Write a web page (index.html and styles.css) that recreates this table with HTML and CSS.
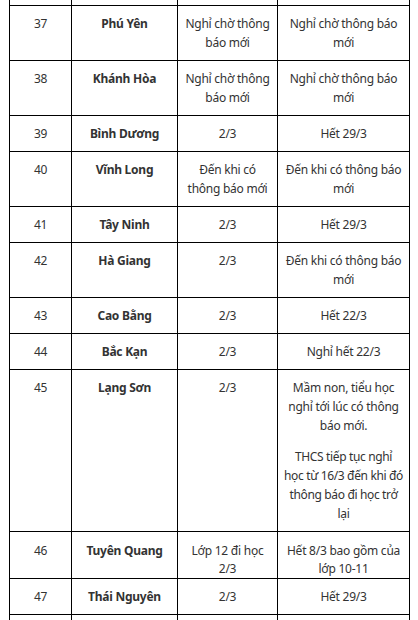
FILE: index.html
```html
<!DOCTYPE html>
<html lang="vi">
<head>
<meta charset="utf-8">
<link rel="stylesheet" href="styles.css">
</head>
<body>
<div class="wrap">
<table class="tbl">
<colgroup><col class="c1"><col class="c2"><col class="c3"><col class="c4"></colgroup>
<tbody>
<tr class="stub"><td></td><td></td><td></td><td></td></tr>
<tr><td>37</td><td class="b">Phú Yên</td><td>Nghỉ chờ thông báo mới</td><td>Nghỉ chờ thông báo mới</td></tr>
<tr><td>38</td><td class="b">Khánh Hòa</td><td>Nghỉ chờ thông báo mới</td><td>Nghỉ chờ thông báo mới</td></tr>
<tr><td>39</td><td class="b">Bình Dương</td><td>2/3</td><td>Hết 29/3</td></tr>
<tr><td>40</td><td class="b">Vĩnh Long</td><td>Đến khi có thông báo mới</td><td>Đến khi có thông báo mới</td></tr>
<tr><td>41</td><td class="b">Tây Ninh</td><td>2/3</td><td>Hết 29/3</td></tr>
<tr><td>42</td><td class="b">Hà Giang</td><td>2/3</td><td>Đến khi có thông báo mới</td></tr>
<tr><td>43</td><td class="b">Cao Bằng</td><td>2/3</td><td>Hết 22/3</td></tr>
<tr><td>44</td><td class="b">Bắc Kạn</td><td>2/3</td><td>Nghỉ hết 22/3</td></tr>
<tr><td>45</td><td class="b">Lạng Sơn</td><td>2/3</td><td><p class="para">Mầm non, tiểu học nghỉ tới lúc có thông báo mới.</p><p class="para last">THCS tiếp tục nghỉ<br>học từ 16/3 đến khi đó<br>thông báo đi học trở<br>lại</p></td></tr>
<tr class="tight"><td>46</td><td class="b">Tuyên Quang</td><td>Lớp 12 đi học 2/3</td><td>Hết 8/3 bao gồm của lớp 10-11</td></tr>
<tr><td>47</td><td class="b">Thái Nguyên</td><td>2/3</td><td>Hết 29/3</td></tr>
<tr><td>48</td><td class="b">Bắc Giang</td><td>2/3</td><td>Hết 29/3</td></tr>
</tbody>
</table>
</div>
</body>
</html>
```
FILE: styles.css
```css
html, body {
  margin: 0;
  padding: 0;
  background: #fff;
}
body {
  font-family: "Noto Sans", "Open Sans", sans-serif;
  font-size: 12px;
  letter-spacing: -0.25px;
  line-height: 19px;
  color: #333;
  overflow: hidden;
  height: 620px;
}
.wrap {
  padding-left: 9px;
}
.tbl {
  border-collapse: collapse;
  table-layout: fixed;
  width: 400px;
}
.c1 { width: 62px; }
.c2 { width: 106px; }
.c3 { width: 100px; }
.c4 { width: 132px; }
.tbl td {
  border: 1px solid #000;
  padding: 8px 6px;
  text-align: center;
  vertical-align: top;
}
.tbl .stub td {
  padding: 0;
  height: 5px;
  border-top: 0;
}
.tbl .tight td {
  padding: 10px 6px 0;
  line-height: 18px;
}
.b {
  font-weight: bold;
}
.para {
  margin: 0 0 12px;
}
.para.last {
  margin-bottom: 0;
  white-space: nowrap;
  letter-spacing: -0.35px;
}
```
